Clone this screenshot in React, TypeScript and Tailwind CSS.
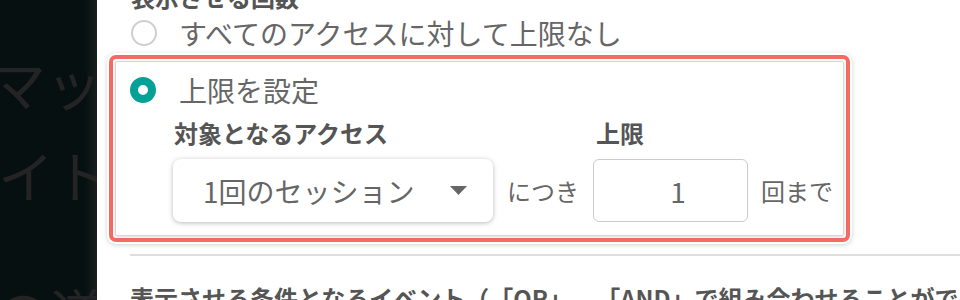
import React from 'react';

function Radio({ checked }: { checked?: boolean }) {
  return checked ? (
    <span className="block h-[26px] w-[26px] shrink-0 rounded-full border-[8px] border-[#05a197] bg-white" />
  ) : (
    <span className="block h-[26px] w-[26px] shrink-0 rounded-full border-2 border-[#cfcfcf] bg-white" />
  );
}

export default function App() {
  return (
    <div className="flex h-[300px] w-[960px] overflow-hidden bg-white font-['Noto_Sans_CJK_JP','Noto_Sans',sans-serif] [text-spacing-trim:space-all]">
      {/* page behind the drawer */}
      <div className="w-[97px] shrink-0 overflow-hidden bg-[linear-gradient(to_right,#071010_88%,#1a1f1f)] text-[56px] leading-[1] text-[#242424] whitespace-nowrap">
        <div className="mt-[54px] ml-[-10px]">マップ</div>
        <div className="mt-[36px] ml-[-2px]">イト</div>
        <div className="mt-[82px] ml-[-6px]">の道</div>
      </div>

      {/* drawer */}
      <div className="flex-1 overflow-hidden">
        <div className="mt-[-19px] flex flex-col">
          <div className="pl-[34px] text-[24px] font-bold leading-[32px] text-[#555]">表示させる回数</div>

          <div className="flex h-[40px] items-center gap-[22px] pl-[34px] text-[28px] text-[#666]">
            <Radio />
            <span>すべてのアクセスに対して上限なし</span>
          </div>

          <div className="mt-[2px] ml-[12px] w-[741px] rounded-[7px] border-4 border-[#f36c63] shadow-[0_0_0_2px_#fff,0_1px_5px_2px_rgba(0,0,0,0.18)]">
            <div className="m-[2px] rounded-[2px] border border-[#d6d6d6] pt-[8px] pb-[13px] pl-[14px] shadow-[0_1px_3px_rgba(0,0,0,0.15)]">
              <div className="flex h-[40px] items-center gap-[23px] text-[28px] text-[#666]">
                <Radio checked />
                <span>上限を設定</span>
              </div>

              <div className="mt-[7px] flex items-end pl-[43px]">
                <div className="flex flex-col">
                  <div className="pl-[1px] text-[24px] font-bold leading-[32px] text-[#555]">対象となるアクセス</div>
                  <div className="mt-[10px] flex h-[63px] w-[320px] items-center justify-between rounded-lg bg-white pr-[26px] pl-[30px] shadow-[0_1px_5px_rgba(0,0,0,0.28)]">
                    <span className="text-[28px] text-[#666]">1回のセッション</span>
                    <svg width="17" height="9" viewBox="0 0 17 9">
                      <path d="M0 0 H17 L8.5 9 Z" fill="#666" />
                    </svg>
                  </div>
                </div>

                <div className="flex h-[63px] items-center px-[14px] text-[24px] text-[#666]">につき</div>

                <div className="flex flex-col">
                  <div className="pl-[3px] text-[24px] font-bold leading-[32px] text-[#555]">上限</div>
                  <div className="mt-[10px] flex h-[63px] w-[155px] items-center justify-center rounded-md border-[1.5px] border-[#cbcbcb] pl-[15px] text-[28px] text-[#666]">
                    1
                  </div>
                </div>

                <div className="flex h-[63px] items-center pl-[13px] text-[24px] text-[#666]">回まで</div>
              </div>
            </div>
          </div>

          <div className="mt-[12px] ml-[33px] h-[2px] bg-[#dedede]" />

          <div className="mt-[26px] pl-[33px] text-[24px] font-bold leading-[32px] whitespace-nowrap text-[#555]">
            表示させる条件となるイベント（「OR」、「AND」で組み合わせることができます）
          </div>
        </div>
      </div>
    </div>
  );
}
